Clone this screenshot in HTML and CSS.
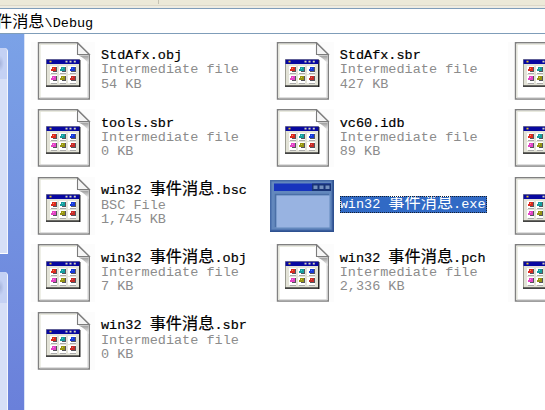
FILE: index.html
```html
<!DOCTYPE html>
<html lang="zh-CN">
<head>
<meta charset="utf-8">
<title>Debug</title>
<link rel="stylesheet" href="styles.css">
</head>
<body>
<svg class="defs" aria-hidden="true">
  <defs>
    <linearGradient id="shade" x1="0" y1="0" x2="0" y2="1"><stop offset="0" stop-color="#999"/><stop offset="1" stop-color="#fff"/></linearGradient>
  </defs>
  <symbol id="doc" viewBox="0 0 64 58">
    <rect width="64" height="58" fill="#fcfcfc"/>
    <path d="M7.500.8H46.500L58.300 12.500V57H7.500Z" fill="#fff" stroke="#808080" stroke-width="1.400"/>
    <path d="M9 56V2.200H45" fill="none" stroke="#dedfd0"/>
    <path d="M9 55.800H57V15" fill="none" stroke="#d0d0d0"/>
    <path d="M47.500 13.500H57.500V22Q55 17 47.500 13.500Z" fill="url(#shade)"/>
    <path d="M46.500 1V12.500H58.300Z" fill="#f5f5f5" stroke="#7c7c7c" stroke-width="1.100"/>
    <rect x="15.500" y="17.500" width="33" height="26.500" fill="#e3e3d7" stroke="#9b9b91"/>
    <path d="M15 44.200H49.400M48.800 18V45" stroke="#161616" stroke-width="1.300"/>
    <rect x="15.500" y="17.600" width="33" height="4.400" fill="#0808a0"/>
    <path d="M18.500 19.600h2" stroke="#e2c330" stroke-width="1.700"/>
    <path d="M34.500 19.600h2M38.500 19.600h2M42.800 19.600h2" stroke="#d5d5bb" stroke-width="1.700"/>
    <g shape-rendering="crispEdges">
      <path d="M19 24h7v8h-7zM28 24h7v8h-7zM37 24h8v8h-8zM19 33h7v8h-7zM28 33h7v8h-7zM37 33h8v8h-8z" fill="#fff"/>
      <path d="M20 31h6v1h-6zM29 31h6v1h-6zM39 31h6v1h-6zM20 41h6v1h-6zM29 41h6v1h-6zM39 41h6v1h-6z" fill="#aaa"/>
      <path d="M22 25h4v5h-4zM31 25h4v5h-4zM40 25h5v5h-5zM22 34h4v5h-4zM31 34h4v5h-4zM40 34h5v5h-5z" fill="#54545c"/>
      <path d="M21 25h4v4h-5v-2h1z" fill="#dc2a20"/><path d="M22 26h1v1h-1z" fill="#ff9040"/>
      <path d="M30 25h4v4h-5v-2h1z" fill="#159d9d"/><path d="M31 26h1v1h-1z" fill="#45d4d0"/>
      <path d="M40 25h4v4h-5v-2h1z" fill="#1739d8"/><path d="M41 26h1v1h-1z" fill="#3c74ff"/>
      <path d="M21 34h4v4h-5v-2h1z" fill="#e244c4"/><path d="M22 35h1v1h-1z" fill="#ff80ef"/>
      <path d="M30 34h4v4h-5v-2h1z" fill="#969414"/><path d="M31 35h1v1h-1z" fill="#cfcd40"/>
      <path d="M40 34h4v4h-5v-2h1z" fill="#c52c28"/><path d="M41 35h1v1h-1z" fill="#ee6050"/>
    </g>
  </symbol>
  <symbol id="app" viewBox="0 0 64 58">
    <rect y="3" width="64" height="52" fill="#2e5190"/>
    <rect y="3" width="62.500" height="50.500" fill="#466ba8"/>
    <rect x="1.500" y="4.500" width="60" height="48" fill="#6388bd"/>
    <rect x="4" y="6.500" width="57" height="7.500" fill="#1734bd"/>
    <rect x="42" y="6.500" width="19" height="7.500" fill="#183376"/>
    <path d="M43.500 10.300h4M49.500 10.300h4M55.500 10.300h4" stroke="#7490bd" stroke-width="3.500"/>
    <path d="M5.500 50V17.500H59" fill="none" stroke="#4b6fa7" stroke-width="1.500"/>
    <rect x="6.500" y="18.500" width="53" height="32" fill="#98b3e1"/>
  </symbol>
</svg>
<div class="window">
  <div class="toolbar"><i class="divider"></i></div>
  <div class="address"><span class="han">件消息</span>\Debug</div>
  <div class="main">
    <aside class="side">
      <section class="panel"><div class="panel-head"></div></section>
      <section class="panel"><div class="panel-head"></div></section>
    </aside>
    <main class="files">
      <div class="file"><svg class="icon"><use href="#doc"/></svg><div class="info"><b>StdAfx.obj</b><span>Intermediate file</span><span>54 KB</span></div></div>
      <div class="file"><svg class="icon"><use href="#doc"/></svg><div class="info"><b>StdAfx.sbr</b><span>Intermediate file</span><span>427 KB</span></div></div>
      <div class="file"><svg class="icon"><use href="#doc"/></svg></div>
      <div class="file"><svg class="icon"><use href="#doc"/></svg><div class="info"><b>tools.sbr</b><span>Intermediate file</span><span>0 KB</span></div></div>
      <div class="file"><svg class="icon"><use href="#doc"/></svg><div class="info"><b>vc60.idb</b><span>Intermediate file</span><span>89 KB</span></div></div>
      <div class="file"><svg class="icon"><use href="#doc"/></svg></div>
      <div class="file"><svg class="icon"><use href="#doc"/></svg><div class="info"><b>win32 <i class="han">事件消息</i>.bsc</b><span>BSC File</span><span>1,745 KB</span></div></div>
      <div class="file"><svg class="icon"><use href="#app"/></svg><div class="info solo"><b class="selected">win32 <i class="han">事件消息</i>.exe</b></div></div>
      <div class="file"><svg class="icon"><use href="#doc"/></svg></div>
      <div class="file"><svg class="icon"><use href="#doc"/></svg><div class="info"><b>win32 <i class="han">事件消息</i>.obj</b><span>Intermediate file</span><span>7 KB</span></div></div>
      <div class="file"><svg class="icon"><use href="#doc"/></svg><div class="info"><b>win32 <i class="han">事件消息</i>.pch</b><span>Intermediate file</span><span>2,336 KB</span></div></div>
      <div class="file"><svg class="icon"><use href="#doc"/></svg></div>
      <div class="file"><svg class="icon"><use href="#doc"/></svg><div class="info"><b>win32 <i class="han">事件消息</i>.sbr</b><span>Intermediate file</span><span>0 KB</span></div></div>
    </main>
  </div>
</div>
</body>
</html>
```
FILE: styles.css
```css
* { box-sizing: border-box; }
body { margin: 0; overflow: hidden; background: #fff; }
.defs { position: absolute; width: 0; height: 0; }
.window {
  width: 545px;
  height: 410px;
  display: flex;
  flex-direction: column;
  overflow: hidden;
  font: 13.53px/14.3px "Liberation Mono", "Noto Sans CJK SC", monospace;
  color: #000;
}
.toolbar {
  flex: none;
  height: 8px;
  background: linear-gradient(#ece9d8 0 5px, #dcd8c9 5px 6px, #eeece2 6px);
}
.divider { display: block; width: 1px; height: 4px; margin-left: 158px; background: #c5c2b3; }
.address {
  flex: none;
  height: 26px;
  border-top: 1px solid #7f9db9;
  border-bottom: 1px solid #7f9db9;
  line-height: 30px;
  white-space: nowrap;
  text-indent: -4px;
}
.han {
  font-family: "Noto Sans CJK SC", sans-serif;
  font-size: 16.2px;
  font-style: normal;
  line-height: 0;
}
.main { flex: 1; display: flex; min-height: 0; }
.side {
  flex: none;
  width: 25px;
  display: flex;
  flex-direction: column;
  gap: 18px;
  padding-top: 14px;
  border-right: 1px solid #d9e3f7;
  background: linear-gradient(#7ba2e7, #6a80da);
}
.panel {
  width: 8px;
  height: 206px;
  flex: none;
  border-right: 1px solid #f4f6fd;
  border-bottom: 1px solid #fff;
  border-top-right-radius: 4px;
  background: #d6dff7;
  overflow: hidden;
}
.panel-head {
  height: 31px;
  background: radial-gradient(ellipse 4px 8px at 0 50%, #a5b3db, #c4d1f4);
}
.files {
  flex: none;
  display: grid;
  grid-template-columns: repeat(3, 238.7px);
  grid-auto-rows: 67.6px;
  padding: 7.5px 0 0 6px;
  align-content: start;
}
.file { display: flex; gap: 6px; height: 58px; }
.icon { flex: none; width: 64px; height: 58px; }
.info { display: flex; flex-direction: column; align-items: flex-start; padding-top: 7.6px; white-space: pre; }
.info b { font-weight: 400; -webkit-text-stroke: .2px currentColor; }
.info span { color: #8c8c8c; }
.info.solo { padding-top: 19px; }
.info .selected {
  height: 17px;
  line-height: 18px;
  padding-right: 1px;
  color: #fff;
  background: #316ac5;
  outline: 1px dotted #17202e;
  outline-offset: -1px;
  -webkit-text-stroke: 0;
}
```
